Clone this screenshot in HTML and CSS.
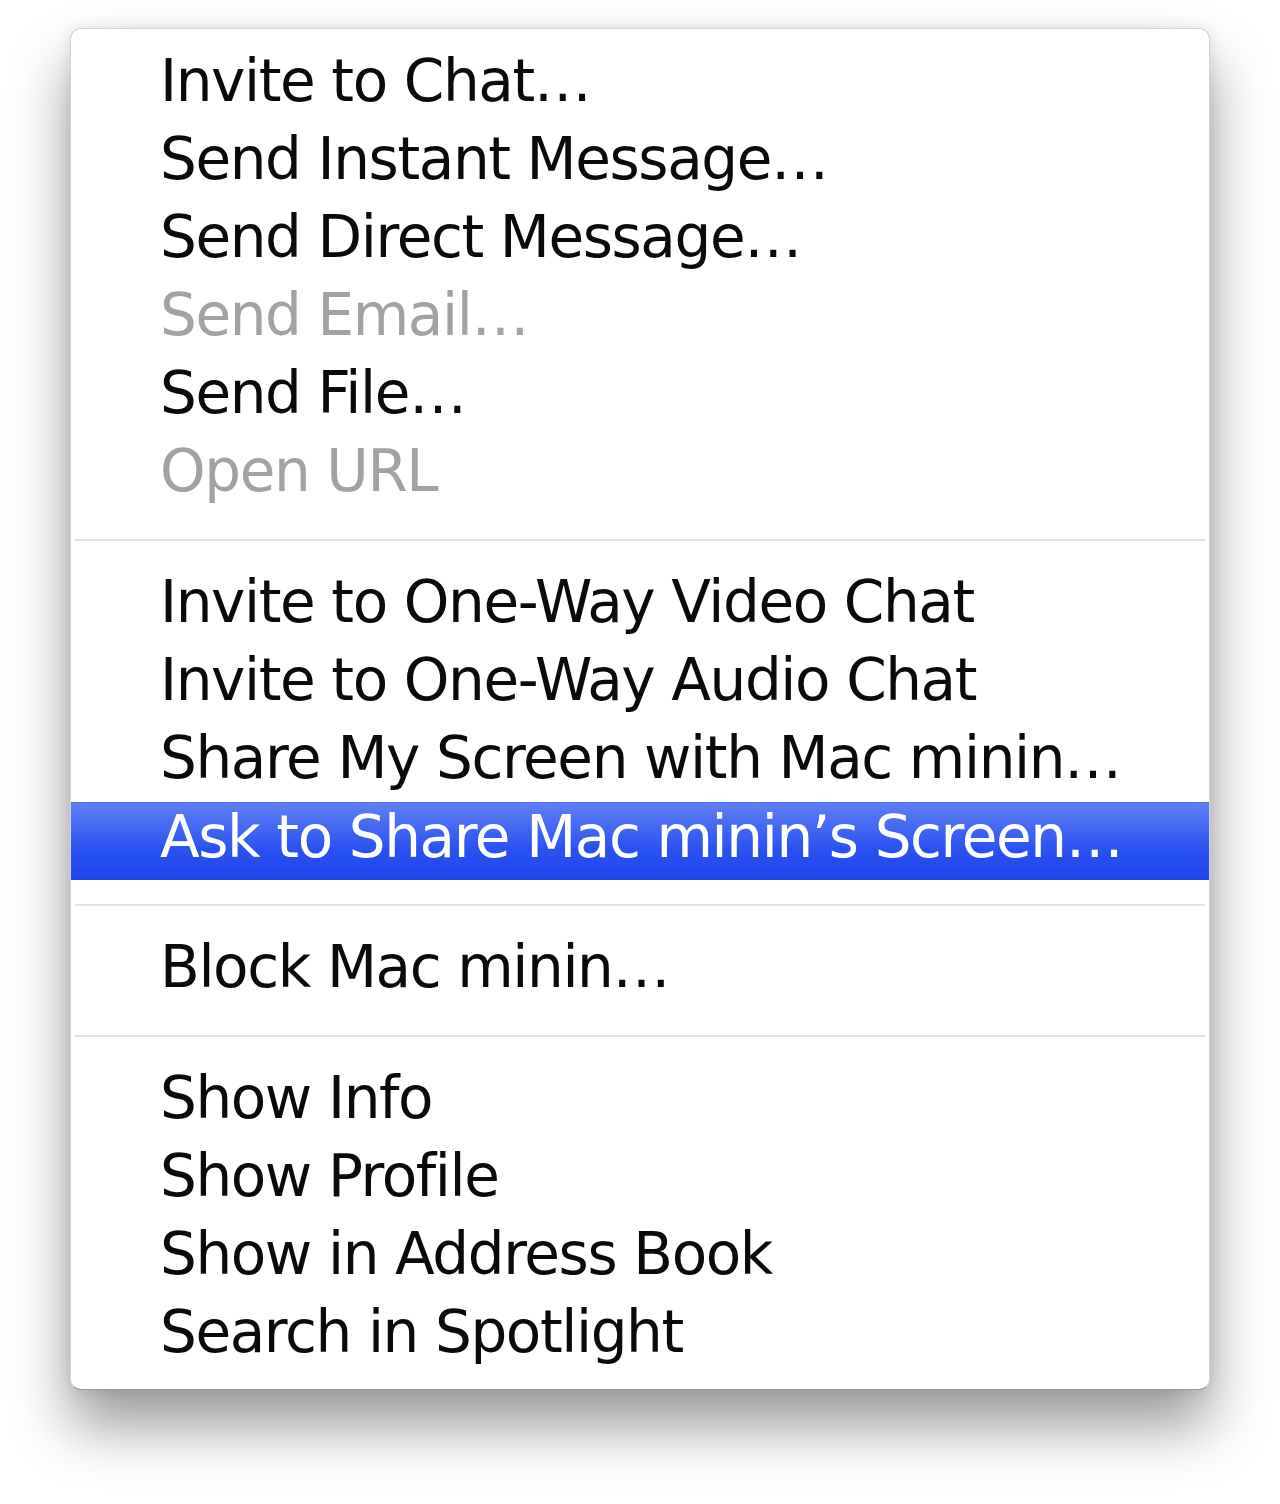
FILE: index.html
```html
<!DOCTYPE html>
<html lang="en">
<head>
  <meta charset="UTF-8">
  <meta name="viewport" content="width=device-width, initial-scale=1.0">
  <title>Buddy menu</title>
  <link rel="stylesheet" href="styles.css">
</head>

<body>
  <div class="page">
    <ul class="menu">
      <li class="item">Invite to Chat…</li>
      <li class="item">Send Instant Message…</li>
      <li class="item">Send Direct Message…</li>
      <li class="item disabled">Send Email…</li>
      <li class="item">Send File…</li>
      <li class="item disabled">Open URL</li>
      <li class="separator"></li>
      <li class="item">Invite to One-Way Video Chat</li>
      <li class="item">Invite to One-Way Audio Chat</li>
      <li class="item">Share My Screen with Mac minin…</li>
      <li class="item selected">Ask to Share Mac minin’s Screen…</li>
      <li class="separator"></li>
      <li class="item">Block Mac minin…</li>
      <li class="separator"></li>
      <li class="item">Show Info</li>
      <li class="item">Show Profile</li>
      <li class="item">Show in Address Book</li>
      <li class="item">Search in Spotlight</li>
    </ul>
  </div>
</body>
</html>
```

FILE: styles.css
```css
html, body {
  margin: 0;
  background: #ffffff;
  font-family: "DejaVu Sans", "Liberation Sans", sans-serif;
}

.page {
  min-height: 1504px;
  box-sizing: border-box;
  padding: 28px 0 0 70px;
  overflow: hidden;
}

.menu {
  list-style: none;
  margin: 0;
  width: 1140px;
  box-sizing: border-box;
  padding: 18px 0 13px 0;
  background: #ffffff;
  border: 1px solid #d4d4d4;
  border-bottom-color: #9a9a9a;
  border-radius: 11px;
  box-shadow: 0 36px 58px rgba(0, 0, 0, 0.40), 0 0 14px rgba(0, 0, 0, 0.10);
}

.item {
  height: 78px;
  line-height: 69px;
  padding-left: 89px;
  font-size: 58px;
  letter-spacing: -1.4px;
  color: #0a0a0a;
  white-space: nowrap;
}

.item.disabled {
  color: #a2a2a2;
}

.item.selected {
  color: #ffffff;
  background: linear-gradient(#5f80f6, #2a52f0 60%, #1c45ec);
  border-top: 1px solid #4a6cf4;
  box-sizing: border-box;
}

.separator {
  height: 53px;
}

.separator::after {
  content: "";
  display: block;
  margin: 0 4px;
  padding-top: 24px;
  border-bottom: 2px solid #e2e2e2;
}
```
